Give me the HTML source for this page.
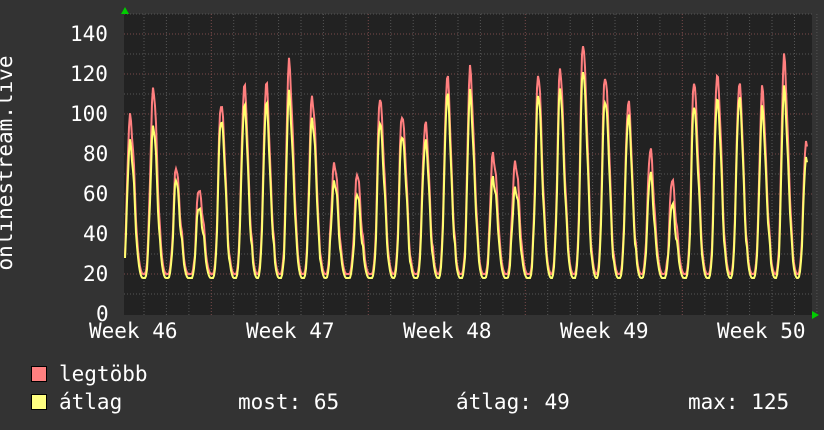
<!DOCTYPE html>
<html><head><meta charset="utf-8"><style>
html,body{margin:0;padding:0;background:#333;}
body{width:824px;height:430px;overflow:hidden;position:relative;font-family:"DejaVu Sans Mono","Liberation Mono",monospace;color:#fff;}
.t{position:absolute;font-size:21px;line-height:20px;white-space:pre;}
.sq{position:absolute;width:14px;height:14px;border:1px solid #000;}
</style></head><body>
<svg id="g" width="824" height="430" style="position:absolute;left:0;top:0">
<rect x="124" y="14" width="688" height="301" fill="#222"/>
<g id="grid"></g>
<path id="pmax" fill="none" stroke="#ff7f7f" stroke-width="2"/>
<path id="pavg" fill="none" stroke="#ffff70" stroke-width="2"/>
<polygon points="121,14 129,14 125,7" fill="#0c0"/>
<polygon points="812,311 812,319 819,315" fill="#0c0"/>
<text x="12" y="163" fill="#fff" font-size="21" font-family="DejaVu Sans Mono,monospace" text-anchor="middle" transform="rotate(-90 12 163)">onlinestream.live</text>
</svg>
<div class="t" style="left:70px;top:24px">140</div>
<div class="t" style="left:70px;top:64px">120</div>
<div class="t" style="left:70px;top:104px">100</div>
<div class="t" style="left:83px;top:144px">80</div>
<div class="t" style="left:83px;top:184px">60</div>
<div class="t" style="left:83px;top:224px">40</div>
<div class="t" style="left:83px;top:264px">20</div>
<div class="t" style="left:96px;top:304px">0</div>
<div class="t" style="left:89px;top:321px">Week 46</div>
<div class="t" style="left:246px;top:321px">Week 47</div>
<div class="t" style="left:403px;top:321px">Week 48</div>
<div class="t" style="left:560px;top:321px">Week 49</div>
<div class="t" style="left:717px;top:321px">Week 50</div>
<div class="sq" style="left:31px;top:366px;background:#ff8080"></div>
<div class="sq" style="left:31px;top:394px;background:#ffff80"></div>
<div class="t" style="left:59px;top:364px">legtöbb</div>
<div class="t" style="left:59px;top:392px">átlag</div>
<div class="t" style="left:238px;top:392px">most: 65</div>
<div class="t" style="left:456px;top:392px">átlag: 49</div>
<div class="t" style="left:688px;top:392px">max: 125</div>
<script>
var g=document.getElementById('grid'),s='';
for(var v=10;v<=150;v+=10){var y=314-2*v;s+='<line x1="124" x2="812" y1="'+y+'" y2="'+y+'" stroke="'+(v%20==0?'#7a4a4a':'#555')+'" stroke-dasharray="1,2"/>';}
for(var i=0;i<31;i++){var x=144+i*22.43;var red=[3,10,17,24].indexOf(i)>=0;s+='<line x1="'+x.toFixed(1)+'" x2="'+x.toFixed(1)+'" y1="14" y2="315" stroke="'+(red?'#7a4a4a':'#555')+'" stroke-dasharray="1,2"/>';}
g.innerHTML=s;
var pk=[130,153,176,199,221,244,266,289,312,334,357,380,402,425,447,470,493,515,538,560,583,605,628,650,672,694,717,739,762,784,806];
var pv=[99,112,71,62,106,113,113,124,109,75,68,107,100,95,117,120,80,76,118,120,135,120,105,80,65,115,120,115,110,126,84];
var av=[88,95,67,55,100,105,105,110,100,68,60,97,92,88,110,110,70,65,110,112,124,110,100,70,55,105,110,110,102,112,78];
function val(x,arr){var b=19;for(var i=0;i<pk.length;i++){var d=x-pk[i];var w=d<0?2.6:4.2;var f=Math.exp(-(d*d)/(2*w*w));var v=18+(arr[i]-18)*f;if(v>b)b=v;}
var n=Math.sin(x*1.7)*2+Math.sin(x*0.9)*2;return b+(b>30?n:0);}
var a='',b='';for(var x=125;x<=807;x++){var m=val(x,pv)+1,q=val(x,av)-1;if(q>m)q=m;a+=(x==125?'M':'L')+x+','+(314-2*m).toFixed(1);b+=(x==125?'M':'L')+x+','+(314-2*q).toFixed(1);}
document.getElementById('pmax').setAttribute('d',a);document.getElementById('pavg').setAttribute('d',b);
</script>
</body></html>
